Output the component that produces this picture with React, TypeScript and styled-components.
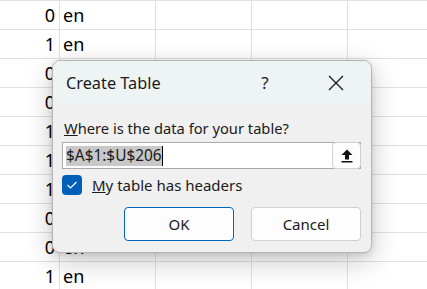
import styled, { createGlobalStyle } from "styled-components";

const GlobalStyle = createGlobalStyle`
  * {
    box-sizing: border-box;
  }
  body {
    margin: 0;
    background: #ffffff;
    font-family: "Noto Sans", "Open Sans", sans-serif;
    color: #1b1b1b;
    overflow: hidden;
  }
`;

const Page = styled.div`
  position: relative;
  width: 427px;
  height: 289px;
  overflow: hidden;
`;

const Sheet = styled.div`
  display: flex;
  flex-direction: column;
`;

const Row = styled.div`
  display: grid;
  grid-template-columns: 60px 96px 96px 96px 96px;
  height: 29px;
  border-top: 1px solid #e1e1e1;
`;

const Cell = styled.div<{ $align?: "left" | "right" }>`
  border-right: 1px solid #e1e1e1;
  display: flex;
  align-items: center;
  justify-content: ${(p) => (p.$align === "right" ? "flex-end" : "flex-start")};
  padding: ${(p) => (p.$align === "right" ? "0 4px 0 0" : "0 0 0 3px")};
  font-size: 18px;
  color: #000;
`;

const Dialog = styled.div`
  position: absolute;
  left: 52px;
  top: 60px;
  width: 320px;
  height: 193px;
  border: 1px solid #b4b4b4;
  border-radius: 8px;
  background: #f0f0f0;
  overflow: hidden;
  box-shadow: 0 8px 28px rgba(0, 0, 0, 0.22), 0 2px 6px rgba(0, 0, 0, 0.12);
  display: flex;
  flex-direction: column;
`;

const TitleBar = styled.div`
  height: 43px;
  background: #eef4f4;
  display: flex;
  align-items: center;
  padding-left: 13px;
  padding-right: 12px;
`;

const Title = styled.div`
  flex: 1;
  font-size: 16.3px;
  color: #1a1a1a;
`;

const TitleButton = styled.div<{ $gap?: number }>`
  width: 46px;
  height: 100%;
  margin-right: ${(p) => p.$gap ?? 0}px;
  display: flex;
  align-items: center;
  justify-content: center;
  font-size: 17px;
  color: #1a1a1a;
`;

const Body = styled.div`
  display: flex;
  flex-direction: column;
  padding: 14px 10px 0 9px;
`;

const Label = styled.div`
  font-size: 14.7px;
  line-height: 20px;
  padding-left: 2px;
  color: #1a1a1a;
`;

const RangeBox = styled.div`
  margin-top: 4px;
  height: 27px;
  display: flex;
  align-items: center;
  background: #ffffff;
  border: 1px solid #a9a9a9;
  padding-left: 3px;
`;

const RangeText = styled.div`
  flex: 1;
  display: flex;
  align-items: center;
  font-size: 15.4px;
`;

const Selected = styled.span`
  background: #c8c8c8;
  line-height: 20px;
  color: #1a1a1a;
`;

const Caret = styled.span`
  width: 1px;
  height: 20px;
  background: #000;
`;

const PickButton = styled.div`
  width: 29px;
  height: 27px;
  margin-right: -1px;
  border: 1px solid #d0d0d0;
  border-radius: 4px;
  background: #fdfdfd;
  display: flex;
  align-items: center;
  justify-content: center;
`;

const CheckRow = styled.div`
  margin-top: 6px;
  display: flex;
  align-items: center;
  gap: 10px;
  font-size: 15px;
  color: #1a1a1a;
`;

const CheckBox = styled.div`
  width: 20px;
  height: 20px;
  border-radius: 4px;
  background: #005fb8;
  display: flex;
  align-items: center;
  justify-content: center;
`;

const Buttons = styled.div`
  margin-top: 12px;
  display: flex;
  justify-content: flex-end;
  gap: 17px;
`;

const Button = styled.div<{ $primary?: boolean }>`
  width: 110px;
  height: 34px;
  border-radius: 4px;
  background: #fdfdfd;
  border: 1px solid ${(p) => (p.$primary ? "#0067c0" : "#d0d0d0")};
  display: flex;
  align-items: center;
  justify-content: center;
  font-size: 15px;
  color: #1a1a1a;
`;

const values = ["0", "1", "0", "0", "1", "1", "1", "0", "0", "1"];

const App = () => {
  return (
    <Page>
      <GlobalStyle />
      <Sheet>
        {values.map((v, i) => (
          <Row key={i}>
            <Cell $align="right">{v}</Cell>
            <Cell>en</Cell>
            <Cell />
            <Cell />
            <Cell />
          </Row>
        ))}
      </Sheet>
      <Dialog>
        <TitleBar>
          <Title>Create Table</Title>
          <TitleButton $gap={25}>?</TitleButton>
          <TitleButton>
            <svg width="16" height="16" viewBox="0 0 16 16">
              <path d="M1 1 L15 15 M15 1 L1 15" stroke="#1a1a1a" strokeWidth="1.3" fill="none" />
            </svg>
          </TitleButton>
        </TitleBar>
        <Body>
          <Label>
            <u>W</u>here is the data for your table?
          </Label>
          <RangeBox>
            <RangeText>
              <Selected>$A$1:$U$206</Selected>
              <Caret />
            </RangeText>
            <PickButton>
              <svg width="12" height="14" viewBox="0 0 12 14">
                <path d="M6 0.5 L11.5 6 L8 6 L8 10.5 L4 10.5 L4 6 L0.5 6 Z" fill="#111" />
                <rect x="0.5" y="12" width="11" height="1.5" fill="#111" />
              </svg>
            </PickButton>
          </RangeBox>
          <CheckRow>
            <CheckBox>
              <svg width="12" height="10" viewBox="0 0 12 10">
                <path d="M1.5 5 L4.5 8 L10.5 2" stroke="#fff" strokeWidth="1.2" fill="none" />
              </svg>
            </CheckBox>
            <span>
              <u>M</u>y table has headers
            </span>
          </CheckRow>
          <Buttons>
            <Button $primary>OK</Button>
            <Button>Cancel</Button>
          </Buttons>
        </Body>
      </Dialog>
    </Page>
  );
};

export default App;
